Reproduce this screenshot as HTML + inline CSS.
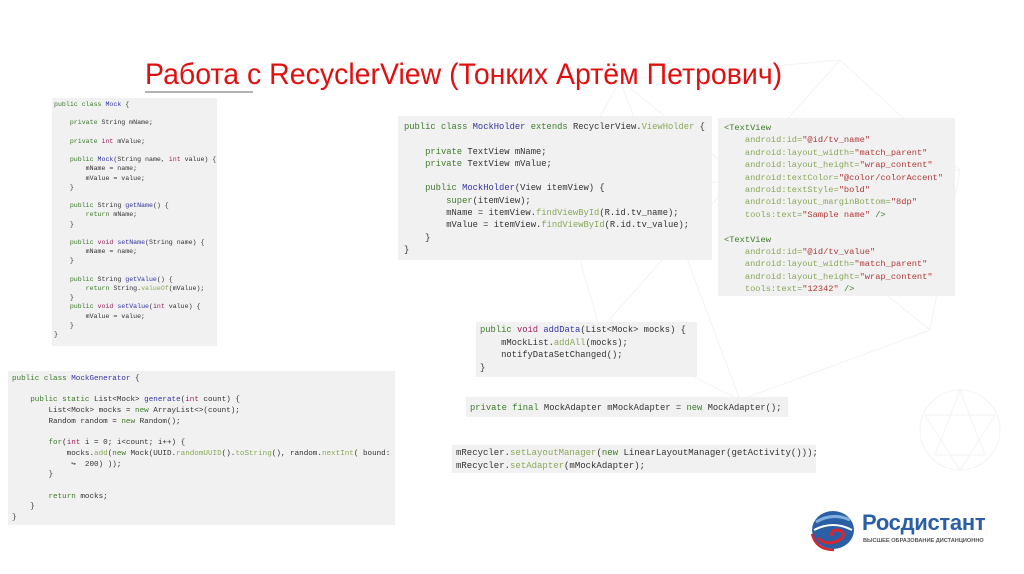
<!DOCTYPE html>
<html><head><meta charset="utf-8"><style>
body{margin:0;width:1024px;height:574px;background:#fff;position:relative;overflow:hidden;font-family:"Liberation Sans",sans-serif}
.b{position:absolute;background:#f1f1f1;margin:0;font-family:"Liberation Mono",monospace;color:#333;white-space:pre;box-sizing:border-box;overflow:hidden}
.k{color:#3d7a2a}.c{color:#3535a5}.r{color:#a02060}.m{color:#8aa85a}.s{color:#b03a3a}
.title{position:absolute;left:145px;top:58px;color:#e01010;font-size:30px;white-space:nowrap;transform-origin:0 0;transform:scaleX(0.95)}
</style></head><body>
<svg style="position:absolute;left:0;top:0" width="1024" height="574">
<g stroke="#f3f3f3" fill="none" stroke-width="1">
<path d="M620 80 L840 60 L960 170 L930 330 L740 400 L600 330 L560 190 Z M620 80 L740 400 M840 60 L600 330 M560 190 L960 170 M930 330 L620 80"/>
<circle cx="960" cy="430" r="40"/>
<path d="M925 415 L995 415 M935 455 L985 455 M960 390 L935 455 M960 390 L985 455 M925 415 L960 470 L995 415"/>
</g>
<line x1="145" y1="92" x2="253" y2="92" stroke="#9a9a9a" stroke-width="1.5"/>
</svg>
<div class="title">Работа с RecyclerView (Тонких Артём Петрович)</div>

<pre class="b" style="left:52px;top:98px;width:165px;height:248px;font-size:6.6px;line-height:9.2px;padding:2px 0 0 2px"><span class="k">public class</span> <span class="c">Mock</span> {

    <span class="k">private</span> String mName;

    <span class="k">private</span> <span class="r">int</span> mValue;

    <span class="k">public</span> <span class="c">Mock</span>(String name, <span class="r">int</span> value) {
        mName = name;
        mValue = value;
    }

    <span class="k">public</span> String <span class="c">getName</span>() {
        <span class="k">return</span> mName;
    }

    <span class="k">public</span> <span class="r">void</span> <span class="c">setName</span>(String name) {
        mName = name;
    }

    <span class="k">public</span> String <span class="c">getValue</span>() {
        <span class="k">return</span> String.<span class="m">valueOf</span>(mValue);
    }
    <span class="k">public</span> <span class="r">void</span> <span class="c">setValue</span>(<span class="r">int</span> value) {
        mValue = value;
    }
}</pre>

<pre class="b" style="left:398px;top:116px;width:314px;height:144px;font-size:8.8px;line-height:12.3px;padding:5px 0 0 6px"><span class="k">public class</span> <span class="c">MockHolder</span> <span class="k">extends</span> RecyclerView.<span class="m">ViewHolder</span> {

    <span class="k">private</span> TextView mName;
    <span class="k">private</span> TextView mValue;

    <span class="k">public</span> <span class="c">MockHolder</span>(View itemView) {
        <span class="k">super</span>(itemView);
        mName = itemView.<span class="m">findViewById</span>(R.id.tv_name);
        mValue = itemView.<span class="m">findViewById</span>(R.id.tv_value);
    }
}</pre>

<pre class="b" style="left:718px;top:118px;width:237px;height:178px;font-size:8.7px;line-height:12.4px;padding:4px 0 0 6px"><span class="k">&lt;TextView</span>
    <span class="m">android:id=</span><span class="s">"@id/tv_name"</span>
    <span class="m">android:layout_width=</span><span class="s">"match_parent"</span>
    <span class="m">android:layout_height=</span><span class="s">"wrap_content"</span>
    <span class="m">android:textColor=</span><span class="s">"@color/colorAccent"</span>
    <span class="m">android:textStyle=</span><span class="s">"bold"</span>
    <span class="m">android:layout_marginBottom=</span><span class="s">"8dp"</span>
    <span class="m">tools:text=</span><span class="s">"Sample name"</span> <span class="k">/&gt;</span>

<span class="k">&lt;TextView</span>
    <span class="m">android:id=</span><span class="s">"@id/tv_value"</span>
    <span class="m">android:layout_width=</span><span class="s">"match_parent"</span>
    <span class="m">android:layout_height=</span><span class="s">"wrap_content"</span>
    <span class="m">tools:text=</span><span class="s">"12342"</span> <span class="k">/&gt;</span></pre>

<pre class="b" style="left:8px;top:371px;width:387px;height:154px;font-size:7.6px;line-height:10.7px;padding:3px 0 0 4px"><span class="k">public class</span> <span class="c">MockGenerator</span> {

    <span class="k">public static</span> List&lt;Mock&gt; <span class="c">generate</span>(<span class="r">int</span> count) {
        List&lt;Mock&gt; mocks = <span class="k">new</span> ArrayList&lt;&gt;(count);
        Random random = <span class="k">new</span> Random();

        <span class="k">for</span>(<span class="r">int</span> i = 0; i&lt;count; i++) {
            mocks.<span class="m">add</span>(<span class="k">new</span> Mock(UUID.<span class="m">randomUUID</span>().<span class="m">toString</span>(), random.<span class="m">nextInt</span>( bound:
             ↪  200) ));
        }

        <span class="k">return</span> mocks;
    }
}</pre>

<pre class="b" style="left:476px;top:322px;width:221px;height:55px;font-size:8.8px;line-height:12.6px;padding:2px 0 0 4px"><span class="k">public</span> <span class="r">void</span> <span class="c">addData</span>(List&lt;Mock&gt; mocks) {
    mMockList.<span class="m">addAll</span>(mocks);
    notifyDataSetChanged();
}</pre>

<pre class="b" style="left:466px;top:397px;width:322px;height:20px;font-size:8.8px;line-height:12px;padding:5px 0 0 4px"><span class="k">private</span> <span class="k">final</span> MockAdapter mMockAdapter = <span class="k">new</span> MockAdapter();</pre>

<pre class="b" style="left:452px;top:445px;width:364px;height:28px;font-size:9px;line-height:12.6px;padding:2px 0 0 4px">mRecycler.<span class="m">setLayoutManager</span>(<span class="k">new</span> LinearLayoutManager(getActivity()));
mRecycler.<span class="m">setAdapter</span>(mMockAdapter);</pre>

<svg style="position:absolute;left:808px;top:508px" width="50" height="45" viewBox="0 0 50 45">
<ellipse cx="25" cy="22" rx="21" ry="19" fill="#2a5fa6"/>
<path d="M8 14 Q25 4 42 12" stroke="#7fb0de" stroke-width="3" fill="none"/>
<path d="M6 22 Q25 12 44 22" stroke="#fff" stroke-width="2" fill="none"/>
<path d="M10 30 Q20 40 34 30 Q38 24 30 22 Q22 22 24 28" stroke="#d8262e" stroke-width="3" fill="none"/>
<path d="M4 26 Q8 42 26 42" stroke="#d8262e" stroke-width="2.5" fill="none"/>
</svg>
<div style="position:absolute;left:862px;top:510px;font-size:22px;font-weight:bold;color:#2a5fa6;letter-spacing:-0.3px">Росдистант</div>
<div style="position:absolute;left:863px;top:538px;font-size:5.6px;font-weight:bold;color:#555;white-space:nowrap">ВЫСШЕЕ ОБРАЗОВАНИЕ ДИСТАНЦИОННО</div>
</body></html>
